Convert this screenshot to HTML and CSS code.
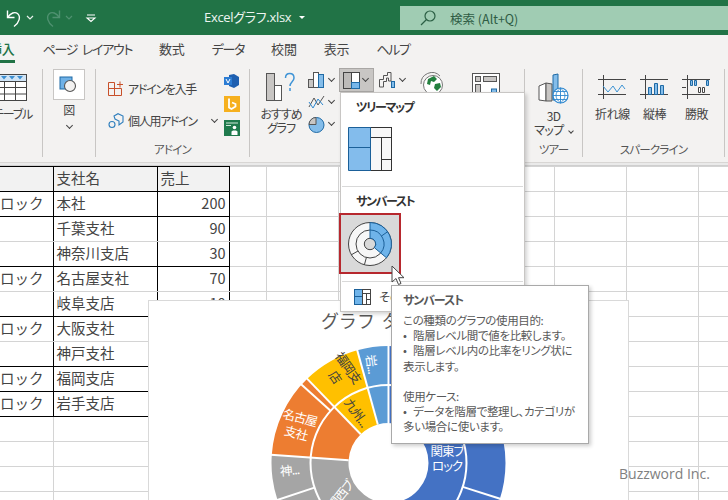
FILE: index.html
```html
<!DOCTYPE html>
<html lang="ja">
<head>
<meta charset="utf-8">
<title>Excelグラフ.xlsx</title>
<link rel="stylesheet" href="styles.css">
</head>
<body>
<div class="app">
  <header class="titlebar">
    <svg class="qa" width="110" height="35" viewBox="0 0 110 35" fill="none">
      <path d="M7.500 10.500v7h7M8 17C10.500 13 15 11.500 17.500 13.500c3.500 3 2 9-3.500 13" stroke="#fff" stroke-width="1.400"/>
      <path d="M27 16l3 3 3-3" stroke="#e8f0eb" stroke-width="1.200"/>
      <path d="M59.500 10.500v7h-7M59 17C56.500 13 52 11.500 49.500 13.500c-3.500 3-2 9 3.500 13" stroke="#4f9170" stroke-width="1.400"/>
      <path d="M66 16l3 3 3-3" stroke="#4f9170" stroke-width="1.200"/>
      <path d="M87 15h8M87 18h8l-4 3.500z" stroke="#fff" stroke-width="1.100"/>
    </svg>
    <div class="doc">Excelグラフ.xlsx<span class="doc-caret"></span></div>
    <div class="search">
      <svg width="16" height="16" viewBox="0 0 16 16" fill="none" stroke="#2c5f45" stroke-width="1.200"><circle cx="10" cy="6" r="5"/><path d="M6.500 9.500L1 15"/></svg>
      <span>検索 (Alt+Q)</span>
    </div>
  </header>

  <nav class="tabs">
    <span class="tab active">挿入</span>
    <span class="tab kana">ページ レイアウト</span>
    <span class="tab">数式</span>
    <span class="tab kana">データ</span>
    <span class="tab">校閲</span>
    <span class="tab">表示</span>
    <span class="tab kana">ヘルプ</span>
  </nav>

  <section class="ribbon">
    <div class="group g-table">
      <div class="g-body col-item">
        <svg class="i-table" width="33" height="29" viewBox="0 0 33 29" fill="none">
          <rect x="0.500" y="1.500" width="32" height="26" fill="#fff" stroke="#444"/>
          <rect x="1" y="2" width="31" height="6" fill="#cfe4f6"/>
          <path d="M7 3h6l-3 3.500zM15 3h6l-3 3.500zM23 3h6l-3 3.500z" fill="#3d8fd0"/>
          <path d="M1 8.500h31M1 14.500h31M1 21h31M10.500 8v19M21.500 8v19" stroke="#444"/>
        </svg>
        <span class="lbl">テーブル</span>
      </div>
    </div>

    <div class="group g-pic">
      <div class="g-body col-item">
        <div class="pic-btn">
          <svg width="20" height="20" viewBox="0 0 20 20"><rect x="1" y="2" width="12" height="12" fill="#6fb1e6" stroke="#1f6aa5"/><circle cx="11" cy="11" r="5.500" fill="#f3f2f1" stroke="#555" stroke-width="1.100"/></svg>
        </div>
        <span class="lbl pic-lbl">図</span>
        <i class="chev"></i>
      </div>
    </div>

    <div class="group g-addin">
      <div class="g-body addin-body">
        <div class="addin-col">
          <div class="addin-row">
            <svg width="16" height="16" viewBox="0 0 16 16" fill="none" stroke="#c8502a"><path d="M.500 1.500h6v6h-6zM.500 7.500h6v7h-6zM6.500 7.500h7v7h-7zM12 .5v6M9 3.500h6"/></svg>
            <span class="lbl lbl-narrow">アドインを入手</span>
          </div>
          <div class="addin-row">
            <svg width="16" height="16" viewBox="0 0 16 16" fill="none" stroke="#2f7fbd" stroke-width="1.100"><path d="M6 3l4-2.300 5 2.300v6l-4 3V8L7 6z"/><circle cx="4" cy="11.500" r="3"/></svg>
            <span class="lbl lbl-narrow">個人用アドイン</span>
            <i class="chev chev-row"></i>
          </div>
        </div>
        <div class="addin-apps">
          <svg width="16" height="14" viewBox="0 0 16 14"><path d="M5 1l5-1 5 3v8l-5 3-5-2z" fill="#1e5fb0"/><rect x="0" y="3" width="8" height="8" fill="#2b7cd3"/><path d="M2 5l2 4 2-4" stroke="#fff" fill="none"/></svg>
          <svg width="16" height="16" viewBox="0 0 16 16"><rect width="16" height="16" fill="#f6b01e"/><path d="M5 2.500v9l2.500 1.500 4-2.500v-2.500L8 6.500" fill="none" stroke="#fff" stroke-width="1.800"/></svg>
          <svg width="16" height="16" viewBox="0 0 16 16"><rect width="16" height="16" fill="#1f7a4d"/><path d="M2 3h12M2 5.500h5" stroke="#cfe8da"/><circle cx="10.500" cy="7.500" r="1.800" fill="#fff"/><path d="M7.500 15v-3.500l1.500-1h3l1.500 1V15z" fill="#fff"/></svg>
        </div>
      </div>
      <div class="g-label">アドイン</div>
    </div>

    <div class="group g-chart">
      <div class="g-body chart-body">
        <div class="col-item rec">
          <svg width="30" height="29" viewBox="0 0 30 29"><rect x="0.500" y="1.500" width="8" height="27" fill="#c8c6c4" stroke="#555"/><rect x="8.500" y="13.500" width="7" height="15" fill="#fff" stroke="#555"/><path d="M19.500 6c0-6 8.500-6 8.500 0 0 3.500-4 4-4 8M24 16v3" fill="none" stroke="#3f94d6" stroke-width="1.500"/></svg>
          <span class="lbl lbl-tight">おすすめ<br>グラフ</span>
        </div>
        <div class="mini-col">
          <div class="mini">
            <svg width="17" height="16" viewBox="0 0 17 16"><rect x="0.500" y="7.500" width="5" height="8" fill="#c8c6c4" stroke="#555"/><rect x="5.500" y="0.500" width="5" height="15" fill="#fff" stroke="#555"/><rect x="10.500" y="2.500" width="5" height="13" fill="#84bdea" stroke="#1f6aa5"/></svg><i class="chev"></i>
          </div>
          <div class="mini">
            <svg width="17" height="16" viewBox="0 0 17 16" fill="none"><path d="M1 13L6 4l4 7 6-9" stroke="#555"/><path d="M1 8l4 6 5-9 5 6" stroke="#2f88cf"/></svg><i class="chev"></i>
          </div>
          <div class="mini">
            <svg width="17" height="17" viewBox="0 0 17 17"><circle cx="8.500" cy="9" r="7.500" fill="#84bdea" stroke="#1f6aa5"/><path d="M8 1.500A7 7 0 0 0 1 8.500h7z" fill="#c8c6c4" stroke="#555"/></svg><i class="chev"></i>
          </div>
        </div>
        <div class="top-col">
          <div class="hier-btn">
            <svg width="17" height="17" viewBox="0 0 17 17"><rect x="0.500" y="0.500" width="8" height="16" fill="#bdbbb9" stroke="#444"/><rect x="8.500" y="0.500" width="8" height="10" fill="#fff" stroke="#444"/><rect x="8.500" y="10.500" width="8" height="6" fill="#78b7ea" stroke="#1f6aa5"/></svg><i class="chev"></i>
          </div>
          <div class="mini wf">
            <svg width="17" height="16" viewBox="0 0 17 16" fill="none" stroke="#555"><path d="M.500 15V7.500h4V3.500h4V.5h3.500V9H9.500V6h-2v3.500h-3V15z" fill="#f3f2f1"/><rect x="12.500" y="9.500" width="3" height="6" fill="#84bdea" stroke="#1f6aa5"/></svg><i class="chev"></i>
          </div>
          <svg class="globe" width="24" height="24" viewBox="0 0 24 24"><path d="M1 12A11 11 0 0 1 20 4" fill="none" stroke="#777"/><circle cx="13" cy="13" r="9.500" fill="#fff" stroke="#777"/><path d="M8 7l6-3 3 3-3 3-3-1-1 4-3-1zM15 12l5-1 1 4-4 4-3-3z" fill="#23803f"/></svg>
          <svg class="pivot" width="29" height="24" viewBox="0 0 29 24" fill="none" stroke="#555"><rect x="0.500" y="0.500" width="27" height="23" fill="#fff"/><rect x="3.500" y="3.500" width="5" height="5" fill="#c8c6c4"/><rect x="11.500" y="3.500" width="13" height="5" fill="#c8c6c4"/><rect x="3.500" y="11.500" width="5" height="12" fill="#c8c6c4"/><rect x="19.500" y="16" width="5" height="8" fill="#84bdea" stroke="#1f6aa5"/></svg>
        </div>
      </div>
    </div>

    <div class="group g-tour">
      <div class="g-body col-item">
        <svg width="31" height="31" viewBox="0 0 31 31"><path d="M1 13l7-3v18l-7-1z" fill="#fff" stroke="#555"/><path d="M8 10l6 1v17H8z" fill="#c8c6c4" stroke="#555"/><path d="M15 2l5-1v26h-5z" fill="#84bdea" stroke="#1f6aa5"/><circle cx="22.500" cy="22.500" r="7.500" fill="#fff" stroke="#2f88cf" stroke-width="1.200"/><path d="M15 22.500h15M16 18.500h13M16 26.500h13M22.500 15v15M22.500 15c-6 5-6 10 0 15M22.500 15c6 5 6 10 0 15" fill="none" stroke="#2f88cf" stroke-width=".9"/></svg>
        <span class="lbl map-lbl">3D<br>マップ<i class="chev chev-in"></i></span>
      </div>
      <div class="g-label">ツアー</div>
    </div>

    <div class="group g-spark">
      <div class="g-body spark-body">
        <div class="col-item">
          <svg class="sp" width="29" height="24" viewBox="0 0 29 24" fill="none"><path d="M0 4.500h28M0 19.500h28M5.500 0v24" stroke="#444"/><path d="M5 11l5 6 5-6 4 6 5-7 3 4" stroke="#3b93d4"/></svg>
          <span class="lbl">折れ線</span>
        </div>
        <div class="col-item">
          <svg class="sp" width="29" height="24" viewBox="0 0 29 24" fill="none"><path d="M0 4.500h28M0 19.500h28M5.500 0v24" stroke="#444"/><path d="M8.500 12.500h3v7h-3zM14.500 8.500h3v11h-3zM20.500 10.500h3v9h-3z" fill="#84bdea" stroke="#1f6aa5"/></svg>
          <span class="lbl">縦棒</span>
        </div>
        <div class="col-item">
          <svg class="sp" width="29" height="24" viewBox="0 0 29 24" fill="none"><path d="M0 4.500h28M0 12.500h4M0 19.500h28M5.500 0v24" stroke="#444"/><path d="M8.500 5.500h2v5h-2zM12.500 5.500h2v5h-2zM24.500 5.500h2v5h-2z" fill="#84bdea" stroke="#1f6aa5"/><path d="M16.500 12.500h2v5h-2zM20.500 12.500h2v5h-2z" fill="#fff" stroke="#444"/></svg>
          <span class="lbl">勝敗</span>
        </div>
      </div>
      <div class="g-label">スパークライン</div>
    </div>
  </section>

  <div class="colhead"></div>

  <table class="sheet">
    <colgroup>
      <col class="c-a"><col class="c-b"><col class="c-c"><col class="c-d"><col class="c-n"><col class="c-n"><col class="c-n"><col class="c-n"><col class="c-n"><col class="c-n"><col class="c-n">
    </colgroup>
    <tbody>
      <tr class="head ruled"><td class="t"></td><td class="t">支社名</td><td class="t">売上</td><td class="after"></td><td></td><td></td><td></td><td></td><td></td><td></td><td></td></tr>
      <tr class="ruled"><td class="t">ロック</td><td class="t">本社</td><td class="t num">200</td><td class="after"></td><td></td><td></td><td></td><td></td><td></td><td></td><td></td></tr>
      <tr><td class="t"></td><td class="t">千葉支社</td><td class="t num">90</td><td class="after"></td><td></td><td></td><td></td><td></td><td></td><td></td><td></td></tr>
      <tr class="end"><td class="t"></td><td class="t">神奈川支店</td><td class="t num">30</td><td class="after"></td><td></td><td></td><td></td><td></td><td></td><td></td><td></td></tr>
      <tr><td class="t">ロック</td><td class="t">名古屋支社</td><td class="t num">70</td><td class="after"></td><td></td><td></td><td></td><td></td><td></td><td></td><td></td></tr>
      <tr class="end"><td class="t"></td><td class="t">岐阜支店</td><td class="t num">10</td><td class="after"></td><td></td><td></td><td></td><td></td><td></td><td></td><td></td></tr>
      <tr><td class="t">ロック</td><td class="t">大阪支社</td><td class="t num">150</td><td class="after"></td><td></td><td></td><td></td><td></td><td></td><td></td><td></td></tr>
      <tr class="end"><td class="t"></td><td class="t">神戸支社</td><td class="t num">40</td><td class="after"></td><td></td><td></td><td></td><td></td><td></td><td></td><td></td></tr>
      <tr class="end"><td class="t">ロック</td><td class="t">福岡支店</td><td class="t num">50</td><td class="after"></td><td></td><td></td><td></td><td></td><td></td><td></td><td></td></tr>
      <tr class="end"><td class="t">ロック</td><td class="t">岩手支店</td><td class="t num">30</td><td class="after"></td><td></td><td></td><td></td><td></td><td></td><td></td><td></td></tr>
      <tr><td></td><td></td><td></td><td></td><td></td><td></td><td></td><td></td><td></td><td></td><td></td></tr>
      <tr><td></td><td></td><td></td><td></td><td></td><td></td><td></td><td></td><td></td><td></td><td></td></tr>
      <tr><td></td><td></td><td></td><td></td><td></td><td></td><td></td><td></td><td></td><td></td><td></td></tr>
      <tr><td></td><td></td><td></td><td></td><td></td><td></td><td></td><td></td><td></td><td></td><td></td></tr>
    </tbody>
  </table>

  <figure class="chart">
    <svg width="478" height="200" viewBox="0 0 478 200">
      <text class="chart-title" x="239" y="27" text-anchor="middle">グラフ タイトル</text>
      <g transform="translate(239.500 162)" fill="none">
        <circle r="59" stroke-width="38" stroke="#4472C4" pathLength="360" stroke-dasharray="172.500 360" transform="rotate(-90)"/>
        <circle r="59" stroke-width="38" stroke="#A5A5A5" pathLength="360" stroke-dasharray="101.500 360" transform="rotate(82.500)"/>
        <circle r="59" stroke-width="38" stroke="#ED7D31" pathLength="360" stroke-dasharray="42 360" transform="rotate(184)"/>
        <circle r="59" stroke-width="38" stroke="#FFC000" pathLength="360" stroke-dasharray="28.500 360" transform="rotate(226)"/>
        <circle r="59" stroke-width="38" stroke="#5B9BD5" pathLength="360" stroke-dasharray="15.500 360" transform="rotate(254.500)"/>
        <circle r="97.500" stroke-width="39" stroke="#4472C4" pathLength="360" stroke-dasharray="172.500 360" transform="rotate(-90)"/>
        <circle r="97.500" stroke-width="39" stroke="#A5A5A5" pathLength="360" stroke-dasharray="101.500 360" transform="rotate(82.500)"/>
        <circle r="97.500" stroke-width="39" stroke="#ED7D31" pathLength="360" stroke-dasharray="42 360" transform="rotate(184)"/>
        <circle r="97.500" stroke-width="39" stroke="#FFC000" pathLength="360" stroke-dasharray="28.500 360" transform="rotate(226)"/>
        <circle r="97.500" stroke-width="39" stroke="#5B9BD5" pathLength="360" stroke-dasharray="15.500 360" transform="rotate(254.500)"/>
        <circle r="78" stroke="#fff" stroke-width="2"/>
        <g stroke="#fff" stroke-width="2">
          <line y1="-40" y2="-118"/>
          <line y1="-40" y2="-118" transform="rotate(172.500)"/>
          <line y1="-40" y2="-118" transform="rotate(274)"/>
          <line y1="-40" y2="-118" transform="rotate(316)"/>
          <line y1="-40" y2="-118" transform="rotate(344.500)"/>
          <line y1="-78" y2="-118" transform="rotate(107.800)"/>
          <line y1="-78" y2="-118" transform="rotate(156.300)"/>
          <line y1="-78" y2="-118" transform="rotate(251.600)"/>
          <line y1="-78" y2="-118" transform="rotate(312)"/>
        </g>
      </g>
      <g class="seg-w" text-anchor="middle">
        <text x="298" y="155">関東ブ</text>
        <text x="298" y="170">ロック</text>
        <g transform="translate(149 124) rotate(15)"><text y="-3">名古屋</text><text y="13">支社</text></g>
        <g transform="translate(141 174) rotate(-6)"><text>神...</text></g>
        <g transform="translate(195 197) rotate(-52)"><text>関西ブ</text></g>
        <g transform="translate(222 63) rotate(82)"><text y="4">岩...</text></g>
      </g>
      <g class="seg-d" text-anchor="middle">
        <g transform="translate(193 71) rotate(55)"><text y="-3">福岡支</text><text y="13">店</text></g>
        <g transform="translate(207 112) rotate(55)"><text y="4">九州...</text></g>
      </g>
    </svg>
  </figure>

  <div class="gallery">
    <div class="gal-h">ツリーマップ</div>
    <svg class="gal-tree" width="45" height="45" viewBox="0 0 45 45">
      <rect x="22.500" y="0.500" width="21" height="43" fill="#f7f7f7" stroke="#333"/>
      <path d="M22.500 10.500h21M33.500 10.500v33M33.500 32.500h10" fill="none" stroke="#333"/>
      <path d="M.5 .5h22v43H.5z" fill="#83bcec" stroke="#1b6099"/>
      <path d="M.5 20.500h22" stroke="#1b6099"/>
    </svg>
    <hr class="gal-sep gal-sep1">
    <div class="gal-h gal-h2">サンバースト</div>
    <div class="gal-pick">
      <svg width="46" height="46" viewBox="-23 -23 46 46" fill="none">
        <circle r="21.500" fill="#f7f7f7" stroke="#444"/>
        <circle r="14" stroke="#444"/>
        <circle r="5.700" fill="#d9d9d9" stroke="#444"/>
        <path d="M0 -21.500A21.500 21.500 0 0 1 16.500 13.800L4.400 3.700A5.700 5.700 0 0 0 0 -5.700Z" fill="#6fb4ea" stroke="#1b6099"/>
        <path d="M0 -14A14 14 0 0 1 10.700 9M11.500 -8L17.600 -12.300" stroke="#1b6099"/>
        <path d="M-3.600 13.500L-5.600 20.800M-12 7L-18.700 10.800" stroke="#444"/>
      </svg>
    </div>
    <hr class="gal-sep gal-sep2">
    <div class="gal-more">
      <svg width="17" height="16" viewBox="0 0 17 16"><rect x="0.500" y="0.500" width="8" height="15" fill="#6fb4ea" stroke="#1b6099"/><path d="M.5 7.500h8" stroke="#1b6099"/><rect x="8.500" y="0.500" width="8" height="15" fill="#fff" stroke="#444"/><path d="M8.500 4.500h8M12.500 4.500v11M12.500 10.500h4" stroke="#444" fill="none"/></svg>
      <span>その他の階層構造グラフ(M)...</span>
    </div>
  </div>

  <aside class="tip">
    <div class="tip-h">サンバースト</div>
    <p>この種類のグラフの使用目的:<br><span class="bul">•</span>階層レベル間で値を比較します。<br><span class="bul">•</span>階層レベル内の比率をリング状に<br>表示します。</p>
    <p>使用ケース:<br><span class="bul">•</span>データを階層で整理し、カテゴリが<br>多い場合に使います。</p>
  </aside>

  <svg class="cursor" width="14" height="22" viewBox="0 0 14 22"><path d="M1 1v16l4-3.500 2.500 6 2.500-1-2.500-5.800h5.500z" fill="#fff" stroke="#444"/></svg>

  <div class="mark">Buzzword Inc.</div>
</div>
</body>
</html>
```
FILE: styles.css
```css
* { box-sizing: border-box; }
html, body { margin: 0; padding: 0; }
body { width: 728px; height: 500px; overflow: hidden; background: #fff; }
.app {
  position: relative;
  width: 728px;
  height: 500px;
  overflow: hidden;
  font-family: "Noto Sans CJK JP", "Noto Sans", sans-serif;
  font-feature-settings: "palt";
  color: #444;
}

/* title bar */
.titlebar { height: 35px; background: #217346; display: flex; align-items: flex-start; }
.qa { flex: none; }
.doc { margin: 8px 0 0 94px; width: 196px; flex: none; color: #eef5f1; font-size: 13px; line-height: 18px; font-family: "Open Sans", "Noto Sans CJK JP", sans-serif; letter-spacing: -.3px; }
.doc-caret { display: inline-block; width: 0; height: 0; margin: 0 0 2px 8px; border: 3px solid transparent; border-top: 3px solid #fff; border-bottom: 0; vertical-align: middle; }
.search { margin-top: 6px; flex: 1; height: 24px; background: #a0ccb3; display: flex; align-items: center; padding-left: 20px; color: #2f5c45; font-size: 12.5px; }
.search span { margin-left: 14px; }

/* tabs */
.tabs { height: 28px; background: #f3f2f1; display: flex; gap: 27px; margin: 0; padding: 0; font-size: 13px; line-height: 28px; color: #444; }
.tab { letter-spacing: -.2px; height: 28px; white-space: nowrap; }
.tab.kana { letter-spacing: -1.300px; word-spacing: 3px; }
.tab.active { margin-left: -11px; margin-right: 1px; color: #217346; font-weight: 500; border-bottom: 3px solid #217346; }

/* ribbon */
.ribbon { height: 100px; background: #f3f2f1; display: flex; padding-top: 6px; font-size: 12px; line-height: 14px; border-bottom: 1px solid #d8d6d4; }
.group { flex: none; height: 88px; border-right: 1px solid #c8c6c4; position: relative; display: flex; flex-direction: column; }
.g-body { flex: 1; min-height: 0; }
.g-label { height: 15px; margin-top: -1px; text-align: center; font-size: 11.5px; line-height: 15px; letter-spacing: -.8px; color: #555; white-space: nowrap; }
.lbl { letter-spacing: -.4px; white-space: nowrap; text-align: center; }
.lbl-narrow { letter-spacing: -1.300px; }
.col-item { display: flex; flex-direction: column; align-items: center; }
.chev { display: inline-block; width: 5px; height: 5px; border: solid #444; border-width: 0 1px 1px 0; transform: rotate(45deg); flex: none; }

.g-table { width: 43px; }
.g-table .col-item { padding: 4px 10px 0 0; gap: 5px; align-items: flex-end; }
.i-table { margin-right: 5px; }
.g-table .lbl { letter-spacing: -1.200px; }
.g-pic { width: 53px; }
.pic-btn { width: 32px; height: 31px; background: #fff; border: 1px solid #c8c6c4; display: flex; align-items: center; justify-content: center; }
.pic-lbl { margin-top: 3px; }
.g-pic .chev { margin-top: 6px; }
.g-addin { width: 154px; }
.addin-body { display: flex; padding: 5px 0 0 12px; }
.addin-col { width: 116px; display: flex; flex-direction: column; gap: 16px; padding-top: 7px; }
.addin-row { display: flex; align-items: center; gap: 4px; height: 16px; }
.chev-row { margin-left: 11px; margin-top: -3px; }
.addin-apps { display: flex; flex-direction: column; gap: 8px; }
.addin-apps svg { display: block; }

.g-chart { width: 275px; }
.chart-body { display: flex; padding-left: 16px; }
.rec { width: 30px; padding-top: 3px; }
.rec .lbl { margin-top: 6px; }
.lbl-tight { letter-spacing: -1px; }
.mini-col { margin-left: 12px; display: flex; flex-direction: column; gap: 6px; padding-top: 3px; }
.mini { display: flex; align-items: center; gap: 4px; height: 16px; }
.mini svg { flex: none; }
.mini .chev { margin-top: -3px; }
.top-col { margin-left: 5px; margin-top: -1px; height: 24px; display: flex; align-items: flex-start; }
.hier-btn { width: 35px; height: 24px; background: #c8c6c4; border: 1px solid #a9a7a5; display: flex; align-items: center; padding-left: 3px; gap: 3px; }
.hier-btn .chev { margin-top: -3px; }
.wf { margin: 4px 0 0 5px; }
.globe { margin: 4px 0 0 15px; }
.pivot { margin: 5px 0 0 28px; }

.g-tour { width: 58px; }
.g-tour .g-body { padding-top: 4px; }
.map-lbl { display: block; margin-top: 5px; letter-spacing: -.6px; }
.chev-in { margin: 0 0 1px 5px; width: 4px; height: 4px; vertical-align: middle; }
.g-spark { width: 142px; }
.spark-body { display: flex; padding-left: 15px; gap: 13px; }
.spark-body .col-item { width: 29px; padding-top: 6px; gap: 8px; }

/* sheet */
.colhead { height: 3px; background: #eaeaea; border-bottom: 1px solid #cfcfcf; }
.sheet { border-collapse: collapse; table-layout: fixed; width: 770px; font-size: 14.5px; color: #444; }
.c-a { width: 53px; } .c-b { width: 104px; } .c-c { width: 72px; } .c-d { width: 37px; } .c-n { width: 72px; }
.sheet td { height: 25px; padding: 0 3px 2px; border: 1px solid #d4d4d4; white-space: nowrap; overflow: hidden; line-height: 22px; font-feature-settings: normal; }
.sheet td:first-child { padding: 0 0 2px; border-left: 0; }
.sheet td.t { border-left-color: #000; border-right-color: #000; }
.sheet td.t:first-child { border-left-color: #d4d4d4; }
.sheet .ruled td.t, .sheet .end td.t { border-bottom-color: #000; }
.sheet .head td.t { background: #f2f2f2; border-top-color: #000; }
.sheet .num { text-align: right; }

/* floating chart */
.chart { position: absolute; left: 148px; top: 300px; width: 481px; height: 210px; margin: 0; background: #fff; border: 1px solid #d9d9d9; }
.chart svg { display: block; }
.chart-title { font-size: 18px; fill: #595959; letter-spacing: 2.500px; }
.seg-w { font-size: 12.5px; fill: #fff; letter-spacing: -1px; }
.seg-d { font-size: 12.5px; fill: #404040; letter-spacing: -.8px; }

/* gallery menu */
.gallery { position: absolute; left: 340px; top: 92px; width: 185px; height: 220px; background: #fff; border: 1px solid #c8c6c4; box-shadow: 2px 2px 4px rgba(0,0,0,.18); display: flex; flex-direction: column; align-items: flex-start; }
.gal-h { font-size: 12px; font-weight: 700; line-height: 16px; color: #333; margin: 6px 0 0 15px; letter-spacing: -1.400px; }
.gal-h2 { margin-top: 6px; }
.gal-tree { margin: 12px 0 0 7px; display: block; }
.gal-sep { align-self: stretch; margin: 14px 1px 0; border: 0; border-top: 1px solid #d9d9d9; height: 0; }
.gal-pick { width: 62px; height: 61px; margin: 4px 0 0 -2px; background: #d9d9d9; border: 2px solid #b7282e; display: flex; align-items: center; justify-content: center; position: relative; }
.gal-sep2 { margin-top: 7px; }
.gal-more { display: flex; align-items: center; gap: 8px; margin: 6px 0 0 13px; font-size: 12px; white-space: nowrap; }

/* tooltip */
.tip { position: absolute; left: 391px; top: 285px; width: 198px; height: 159px; background: #fff; border: 1px solid #a9a9a9; box-shadow: 2px 2px 4px rgba(0,0,0,.2); padding: 6px 5px 0 11px; font-size: 11.5px; line-height: 15.200px; color: #595959; letter-spacing: -.35px; white-space: nowrap; }
.tip-h { font-weight: 700; font-size: 12px; line-height: 16px; margin-bottom: 5px; letter-spacing: -1.100px; }
.tip p { margin: 0 0 15.200px; }
.bul { display: inline-block; width: 10px; }

.cursor { position: absolute; left: 391px; top: 265px; }
.mark { position: absolute; left: 619px; top: 464px; font-family: "Open Sans", sans-serif; font-size: 14px; line-height: 19px; color: #808080; white-space: nowrap; }
```
